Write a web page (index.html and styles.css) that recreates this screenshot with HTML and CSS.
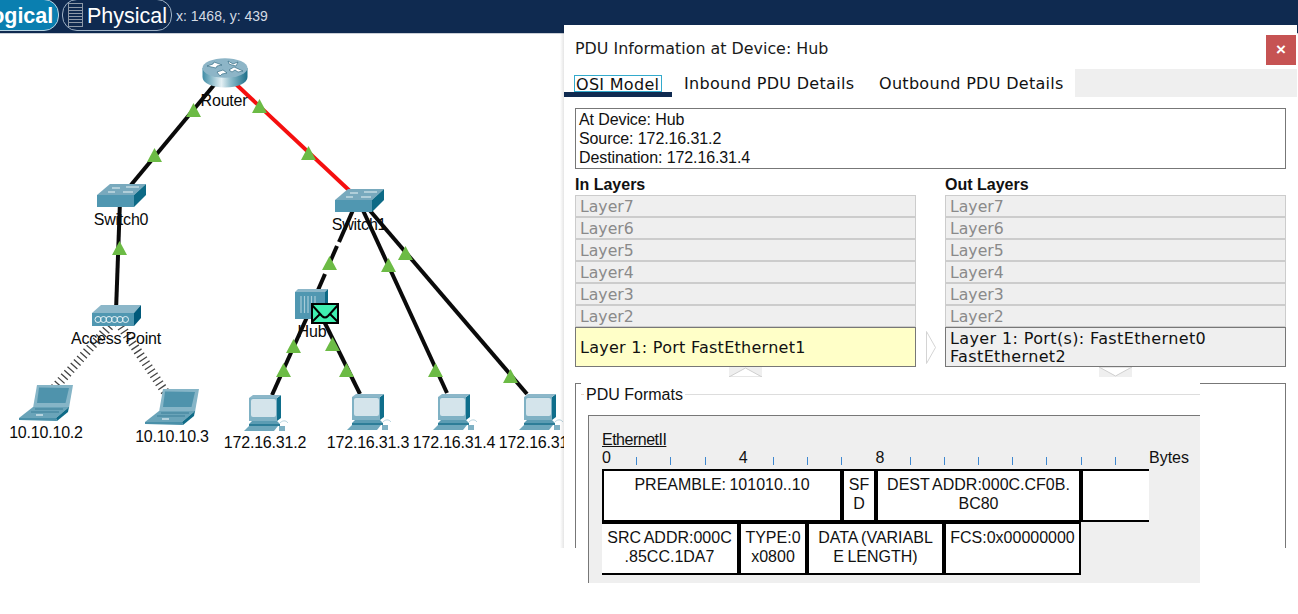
FILE: index.html
```html
<!DOCTYPE html>
<html lang="en">
<head>
<meta charset="utf-8">
<title>PDU Information</title>
<link rel="stylesheet" href="styles.css">
</head>
<body>
<header class="topbar">
  <div class="mode mode-active">Logical</div>
  <div class="mode mode-physical">
    <svg class="rack" width="15" height="24" viewBox="0 0 15 24"><rect x="0.5" y="0.5" width="14" height="23" class="rack-box"/><path d="M1 4.500H14M1 7.500H14M1 10.500H14M1 13.500H14M1 16.500H14M1 19.500H14" class="rack-lines"/></svg>
    <span class="mode-text">Physical</span>
  </div>
  <div class="coords">x: 1468, y: 439</div>
</header>

<main class="canvas">
<svg class="topology" width="1298" height="581" viewBox="0 33 1298 581">
  <defs>
    <linearGradient id="cyl" x1="0" x2="1" y1="0" y2="0">
      <stop offset="0" stop-color="#3f8ca5"/><stop offset="0.42" stop-color="#e4f0f4"/><stop offset="0.62" stop-color="#8fbccb"/><stop offset="1" stop-color="#1c6f89"/>
    </linearGradient>
    <symbol id="router" viewBox="0 0 46 30">
      <path d="M0.500 10V19C0.500 25 10 29.500 23 29.500S45.500 25 45.500 19V10Z" fill="url(#cyl)"/>
      <ellipse cx="23" cy="10" rx="22.500" ry="9.800" fill="#8db5c7"/>
      <path d="M5 8L11 6L12 4L20 7L15 8L14 10ZM26 3L31 6L36 4L34 8L30 7L27 6ZM15 14L21 12L25 15L20 16L18 18ZM27 12L32 9L41 13L36 14L33 12L30 14Z" fill="#fff" stroke="#245f78" stroke-width="0.600"/>
    </symbol>
    <symbol id="switch" viewBox="0 0 49 23">
      <polygon points="0,11 13,0 49,0 37,11" fill="#78a9bd"/>
      <rect x="0" y="11" width="37" height="12" fill="#5097b1"/>
      <polygon points="37,11 49,0 49,11 37,23" fill="#0d6a86"/>
      <path d="M15 4H23M29 3H42M11 8H18M26 8H36" stroke="#e8f3f6" stroke-width="1.200" fill="none"/>
    </symbol>
    <symbol id="ap" viewBox="0 0 49 21">
      <polygon points="0,8 9,0 49,0 42,8" fill="#8cb7c9"/>
      <rect x="0" y="8" width="42" height="13" fill="#5097b1"/>
      <polygon points="42,8 49,0 49,13 42,21" fill="#00597a"/>
      <g fill="none" stroke="#eaf4f7" stroke-width="1">
        <ellipse cx="6" cy="14.500" rx="3" ry="3"/><ellipse cx="11.500" cy="14.500" rx="3" ry="3"/><ellipse cx="17" cy="14.500" rx="3" ry="3"/><ellipse cx="22.500" cy="14.500" rx="3" ry="3"/><ellipse cx="28" cy="14.500" rx="3" ry="3"/><ellipse cx="33.500" cy="14.500" rx="3" ry="3"/>
      </g>
    </symbol>
    <symbol id="hub" viewBox="0 0 33 30">
      <polygon points="0,3 3,0 33,0 30,3" fill="#8cb7c9"/>
      <rect x="0" y="3" width="30" height="27" fill="#5097b1"/>
      <polygon points="30,3 33,0 33,27 30,30" fill="#0d6a86"/>
      <path d="M6 7V24M9.500 7V24M13 7V24M16.500 7V24M20 7V24" stroke="#a7cbd8" stroke-width="1.200"/>
    </symbol>
    <symbol id="laptop" viewBox="0 0 54 37">
      <polygon points="18,1 54,1 50,24 14,24" fill="#86b5c7"/>
      <polygon points="20,3.500 50,4 46.500,19 18,19" fill="#4f93ac"/>
      <polygon points="14,23 50,23 37,34 0,34" fill="#6aa4b9"/>
      <polygon points="0,34 37,34 38,37 0,36" fill="#4a90a9"/>
      <polygon points="37,34 50,23 49,28 38,37" fill="#0f6b87"/>
      <path d="M16 25H44M12 28H40" stroke="#3a7f98" stroke-width="1"/>
      <rect x="17" y="30" width="7" height="2" fill="#b6d3de"/>
    </symbol>
    <symbol id="pc" viewBox="0 0 44 36">
      <polygon points="5,3 33,3 37,0 37,23 33,26 5,26" fill="#0f6e8b"/>
      <polygon points="5,3 9,0 37,0 33,3" fill="#8cb7c9"/>
      <rect x="5" y="3" width="28" height="23" fill="#7fb1c4"/>
      <rect x="7" y="4" width="25" height="18" rx="2" fill="#d4e4eb"/>
      <polygon points="8,26 33,26 36,29 5,29" fill="#5c9cb3"/>
      <polygon points="5,29 36,29 36,31 5,31" fill="#2d7d98"/>
      <polygon points="5,31 34,31 30,36 0,36" fill="#6ea7bc"/>
      <rect x="35" y="31" width="6" height="5" fill="#7fb1c4"/>
      <path d="M35 29C38 25 42 25 44 28" fill="none" stroke="#b6d3de" stroke-width="1"/>
    </symbol>
    <symbol id="tri" viewBox="0 0 15 14"><polygon points="7.500,0 15,14 0,14" fill="#6cbb45"/></symbol>
  </defs>

  <g class="link">
    <line x1="224" y1="72" x2="121" y2="196"/>
    <line x1="120" y1="200" x2="116" y2="310"/>
    <line x1="357" y1="200" x2="339" y2="241"/>
    <line x1="337" y1="245" x2="327" y2="268"/>
    <line x1="325" y1="273" x2="312" y2="303"/>
    <line x1="361" y1="205" x2="447" y2="392"/>
    <line x1="366" y1="205" x2="527" y2="393"/>
    <line x1="312" y1="305" x2="272" y2="394"/>
    <line x1="312" y1="296" x2="360" y2="393"/>
  </g>
  <line class="link-red" x1="224" y1="72" x2="352" y2="192"/>
  <g class="wireless">
    <line x1="116" y1="318" x2="50" y2="392"/>
    <line x1="116" y1="318" x2="168" y2="395"/>
  </g>

  <use href="#tri" x="186" y="102" width="15" height="14"/>
  <use href="#tri" x="147" y="147" width="15" height="14"/>
  <use href="#tri" x="252" y="98" width="15" height="14"/>
  <use href="#tri" x="301" y="145" width="15" height="14"/>
  <use href="#tri" x="112" y="240" width="15" height="14"/>
  <use href="#tri" x="322" y="255" width="15" height="14"/>
  <use href="#tri" x="381" y="257" width="15" height="14"/>
  <use href="#tri" x="398" y="245" width="15" height="14"/>
  <use href="#tri" x="286" y="338" width="15" height="14"/>
  <use href="#tri" x="325" y="336" width="15" height="14"/>
  <use href="#tri" x="276" y="362" width="15" height="14"/>
  <use href="#tri" x="339" y="362" width="15" height="14"/>
  <use href="#tri" x="428" y="362" width="15" height="14"/>
  <use href="#tri" x="503" y="368" width="15" height="14"/>

  <use href="#router" x="202" y="57" width="46" height="30"/>
  <use href="#switch" x="97" y="183" width="49" height="23"/>
  <use href="#switch" x="335" y="188" width="49" height="23"/>
  <use href="#ap" x="92" y="304" width="49" height="21"/>
  <use href="#hub" x="295" y="288" width="33" height="30"/>
  <use href="#laptop" x="19" y="383" width="54" height="37"/>
  <use href="#laptop" x="145" y="387" width="54" height="37"/>
  <use href="#pc" x="244" y="394" width="44" height="36"/>
  <use href="#pc" x="347" y="393" width="44" height="36"/>
  <use href="#pc" x="433" y="393" width="44" height="36"/>
  <use href="#pc" x="519" y="393" width="44" height="36"/>

  <g class="envelope">
    <rect x="312" y="303" width="26" height="19" class="env-body"/>
    <path d="M312 304L322 315Q325 318 328 315L338 304" class="env-flap"/>
    <path d="M312 321L320 313M338 321L330 313" class="env-flap"/>
  </g>

  <g class="label">
    <text x="224" y="105">Router</text>
    <text x="121" y="224">Switch0</text>
    <text x="359" y="229">Switch1</text>
    <text x="116" y="343">Access Point</text>
    <text x="312" y="336">Hub</text>
    <text x="46" y="437">10.10.10.2</text>
    <text x="172" y="441">10.10.10.3</text>
    <text x="265" y="447">172.16.31.2</text>
    <text x="368" y="447">172.16.31.3</text>
    <text x="454" y="447">172.16.31.4</text>
    <text x="540" y="447">172.16.31.5</text>
  </g>
</svg>
</main>

<section class="dialog">
  <div class="dialog-head">
    <h1 class="dialog-title">PDU Information at Device: Hub</h1>
    <div class="close">×</div>
  </div>
  <nav class="tabs">
    <div class="tab tab-first"><span class="tab-focus">OSI Model</span></div>
    <div class="tab tab-second">Inbound PDU Details</div>
    <div class="tab tab-third">Outbound PDU Details</div>
    <div class="tab-fill"></div>
  </nav>
  <div class="info">At Device: Hub<br>Source: 172.16.31.2<br>Destination: 172.16.31.4</div>
  <div class="layers">
    <div class="layer-col">
      <div class="layer-head">In Layers</div>
      <div class="layer">Layer7</div>
      <div class="layer">Layer6</div>
      <div class="layer">Layer5</div>
      <div class="layer">Layer4</div>
      <div class="layer">Layer3</div>
      <div class="layer">Layer2</div>
      <div class="layer-one layer-hot">Layer 1: Port FastEthernet1</div>
      <div class="step">
        <svg width="33" height="10" viewBox="0 0 33 10"><polygon points="0,10 16.500,1 33,10" class="step-mark"/></svg>
      </div>
    </div>
    <div class="layer-mid">
      <svg width="10" height="33" viewBox="0 0 10 33"><polygon points="0.500,0.500 9.500,16.500 0.500,32.500" class="mid-mark"/></svg>
    </div>
    <div class="layer-col">
      <div class="layer-head">Out Layers</div>
      <div class="layer">Layer7</div>
      <div class="layer">Layer6</div>
      <div class="layer">Layer5</div>
      <div class="layer">Layer4</div>
      <div class="layer">Layer3</div>
      <div class="layer">Layer2</div>
      <div class="layer-one layer-out">Layer 1: Port(s): FastEthernet0<br>FastEthernet2</div>
      <div class="step">
        <svg width="33" height="10" viewBox="0 0 33 10"><polygon points="0,0 16.500,9 33,0" class="step-mark"/></svg>
      </div>
    </div>
  </div>
  <div class="fieldset">
    <div class="formats-wrap">
      <div class="legend"><span class="legend-tick"></span><span class="legend-text">PDU Formats</span><span class="legend-line"></span></div>
      <div class="formats">
        <div class="eth-name">EthernetII</div>
        <div class="ruler">
          <span class="num">0</span><i></i><i></i><i></i><span class="num">4</span><i></i><i></i><i></i><span class="num">8</span><i></i><i></i><i></i><i></i><i></i><i></i><i></i><span class="bytes">Bytes</span>
        </div>
        <div class="pkt-row">
          <div class="cell c-pre">PREAMBLE: 101010..10</div>
          <div class="cell c-sfd">SF<br>D</div>
          <div class="cell c-dest">DEST ADDR:000C.CF0B.<br>BC80</div>
          <div class="cell c-blank"></div>
        </div>
        <div class="pkt-row">
          <div class="cell c-src">SRC ADDR:000C<br>.85CC.1DA7</div>
          <div class="cell c-type">TYPE:0<br>x0800</div>
          <div class="cell c-data">DATA (VARIABL<br>E LENGTH)</div>
          <div class="cell c-fcs">FCS:0x00000000</div>
        </div>
      </div>
    </div>
  </div>
</section>
</body>
</html>
```

FILE: styles.css
```css
* { box-sizing: border-box; }
html, body { margin: 0; padding: 0; width: 1298px; height: 614px; overflow: hidden; background: #fff; }
body { font-family: "Liberation Sans", Arial, sans-serif; color: #111; position: relative; }

.topbar { height: 34px; background: #0f2a50; border-bottom: 1px solid #c9ced6; display: flex; align-items: flex-start; overflow: hidden; color: #fff; }
.mode { height: 32px; margin-top: -1px; border: 1px solid #9fb2c6; border-radius: 0 15px 15px 0; font-size: 21.5px; line-height: 33px; white-space: nowrap; }
.mode-active { margin-left: -28px; width: 87px; background: #0a7fb0; font-weight: 700; padding-left: 5px; border-color: #b8d4e2; }
.mode-physical { margin-left: 3px; width: 110px; border-radius: 15px; display: flex; align-items: center; padding-left: 5px; gap: 4px; }
.mode-text { margin-top: 2px; }
.rack { flex: none; }
.rack-box { fill: #0f2a50; stroke: #8d99a8; }
.rack-lines { stroke: #8d99a8; stroke-width: 1; fill: none; }
.coords { margin-left: 4px; font-size: 14px; line-height: 32px; color: #d5dbe3; }

.canvas { height: 580px; }
.topology { display: block; }
.link line { stroke: #0a0a0a; stroke-width: 4; }
.link-red { stroke: #f50f0f; stroke-width: 4; }
.wireless line { stroke: #444; stroke-width: 9; stroke-dasharray: 1.300 3.500; }
.env-body { fill: #3ff0b0; stroke: #000; stroke-width: 2; }
.env-flap { fill: none; stroke: #000; stroke-width: 2; }
.label text { font-family: "Liberation Sans", Arial, sans-serif; font-size: 16px; letter-spacing: -0.2px; text-anchor: middle; fill: #0a0a0a; }

.dialog { position: absolute; left: 564px; top: 25px; width: 733px; height: 523px; background: #fff; }
.dialog::before { content: ""; position: absolute; left: -4px; top: 0; bottom: 0; width: 4px; background: linear-gradient(to right, rgba(0,0,0,0), rgba(0,0,0,0.1)); }
.dialog-head { height: 44px; display: flex; justify-content: space-between; padding: 10px 1px 0 11px; }
.dialog-title { margin: 1px 0 0; font-family: "DejaVu Sans", Verdana, sans-serif; font-weight: 400; font-size: 15.900px; line-height: 26px; color: #1a1a1a; }
.close { width: 30px; height: 30px; background: #c65353; color: #fff; font-size: 17px; font-weight: 700; line-height: 30px; text-align: center; }

.tabs { height: 28px; display: flex; font-family: "DejaVu Sans", Verdana, sans-serif; font-size: 16px; letter-spacing: 0.3px; line-height: 30px; color: #111; }
.tab { white-space: nowrap; height: 28px; }
.tab-first { width: 108px; padding: 6px 0 0 10px; border-bottom: 5px solid #0f2a50; line-height: 16px; }
.tab-focus { display: block; width: 88px; height: 17px; border: 1px solid #33aacc; padding-left: 1px; line-height: 17px; }
.tab-second { width: 207px; padding-left: 12px; }
.tab-third { width: 196px; padding-left: 0; }
.tab-fill { flex: 1; background: #efefef; }

.info { margin: 11px 0 0 11px; width: 711px; height: 61px; border: 1px solid #777; padding: 1px 3px; font-size: 16px; letter-spacing: -0.1px; line-height: 19px; }

.layers { display: flex; margin: 6px 0 0 11px; width: 711px; }
.layer-col { width: 341px; }
.layer-mid { width: 29px; padding: 156px 0 0 10px; }
.mid-mark { fill: #fff; stroke: #d4d4d4; stroke-width: 1; }
.layer-head { height: 20px; font-size: 16px; font-weight: 700; line-height: 19px; }
.layer { height: 22px; border: 1px solid #ccc; background: #efefef; padding-left: 4px; font-family: "DejaVu Sans", Verdana, sans-serif; font-size: 15.700px; line-height: 22px; color: #8a8a8a; }
.layer-one { height: 40px; border: 1px solid #777; padding-left: 4px; font-family: "DejaVu Sans", Verdana, sans-serif; font-size: 16px; }
.layer-hot { background: #ffffc8; letter-spacing: 0.27px; line-height: 40px; }
.layer-out { background: #efefef; letter-spacing: 0.37px; line-height: 18px; padding-top: 2px; }
.step { width: 33px; height: 10px; margin: 0 auto; background: #efefef; display: block; }
.step svg { display: block; }
.step-mark { fill: #fff; stroke: #cfcfcf; stroke-width: 1; }

.fieldset { margin: 6px 0 0 11px; width: 711px; height: 165px; border: 1px solid #777; border-bottom: 0; padding-left: 5px; }
.formats-wrap { margin-top: -1px; width: 619px; height: 200px; background: #fff; position: relative; }
.legend { height: 32px; display: flex; align-items: flex-start; padding-top: 3px; }
.legend-tick { width: 3px; height: 1px; background: #e6d2bc; margin-top: 8px; }
.legend-text { margin-left: 2px; font-size: 16px; line-height: 18px; }
.legend-line { flex: 1; height: 1px; background: #ddd; margin: 8px 0 0 2px; }
.formats { margin-left: 7px; height: 168px; background: #efefef; border-top: 1px solid #777; border-left: 1px solid #777; padding: 14px 0 0 13px; font-size: 16px; }
.eth-name { height: 19px; line-height: 19px; letter-spacing: -0.5px; text-decoration: underline; width: max-content; }
.ruler { display: flex; height: 20px; width: 600px; align-items: flex-start; }
.ruler i { width: 34.200px; height: 8px; margin-top: 8px; flex: none; background: linear-gradient(#3f88d0, #3f88d0) no-repeat left / 1px 8px; }
.ruler .num { width: 34.200px; flex: none; line-height: 18px; }
.bytes { line-height: 18px; }
.pkt-row { display: flex; height: 53px; width: 547px; line-height: 19px; }
.cell { height: 53px; border: 2px solid #000; background: #fff; text-align: center; padding-top: 4px; word-spacing: -1px; white-space: nowrap; flex: none; }
.c-pre { width: 240px; }
.c-sfd { width: 34px; }
.c-dest { width: 205px; }
.c-blank { width: 68px; border-right: 0; }
.c-src { width: 137px; border-left: 0; }
.c-type { width: 68px; }
.c-data { width: 137px; }
.c-fcs { width: 137px; }
```
